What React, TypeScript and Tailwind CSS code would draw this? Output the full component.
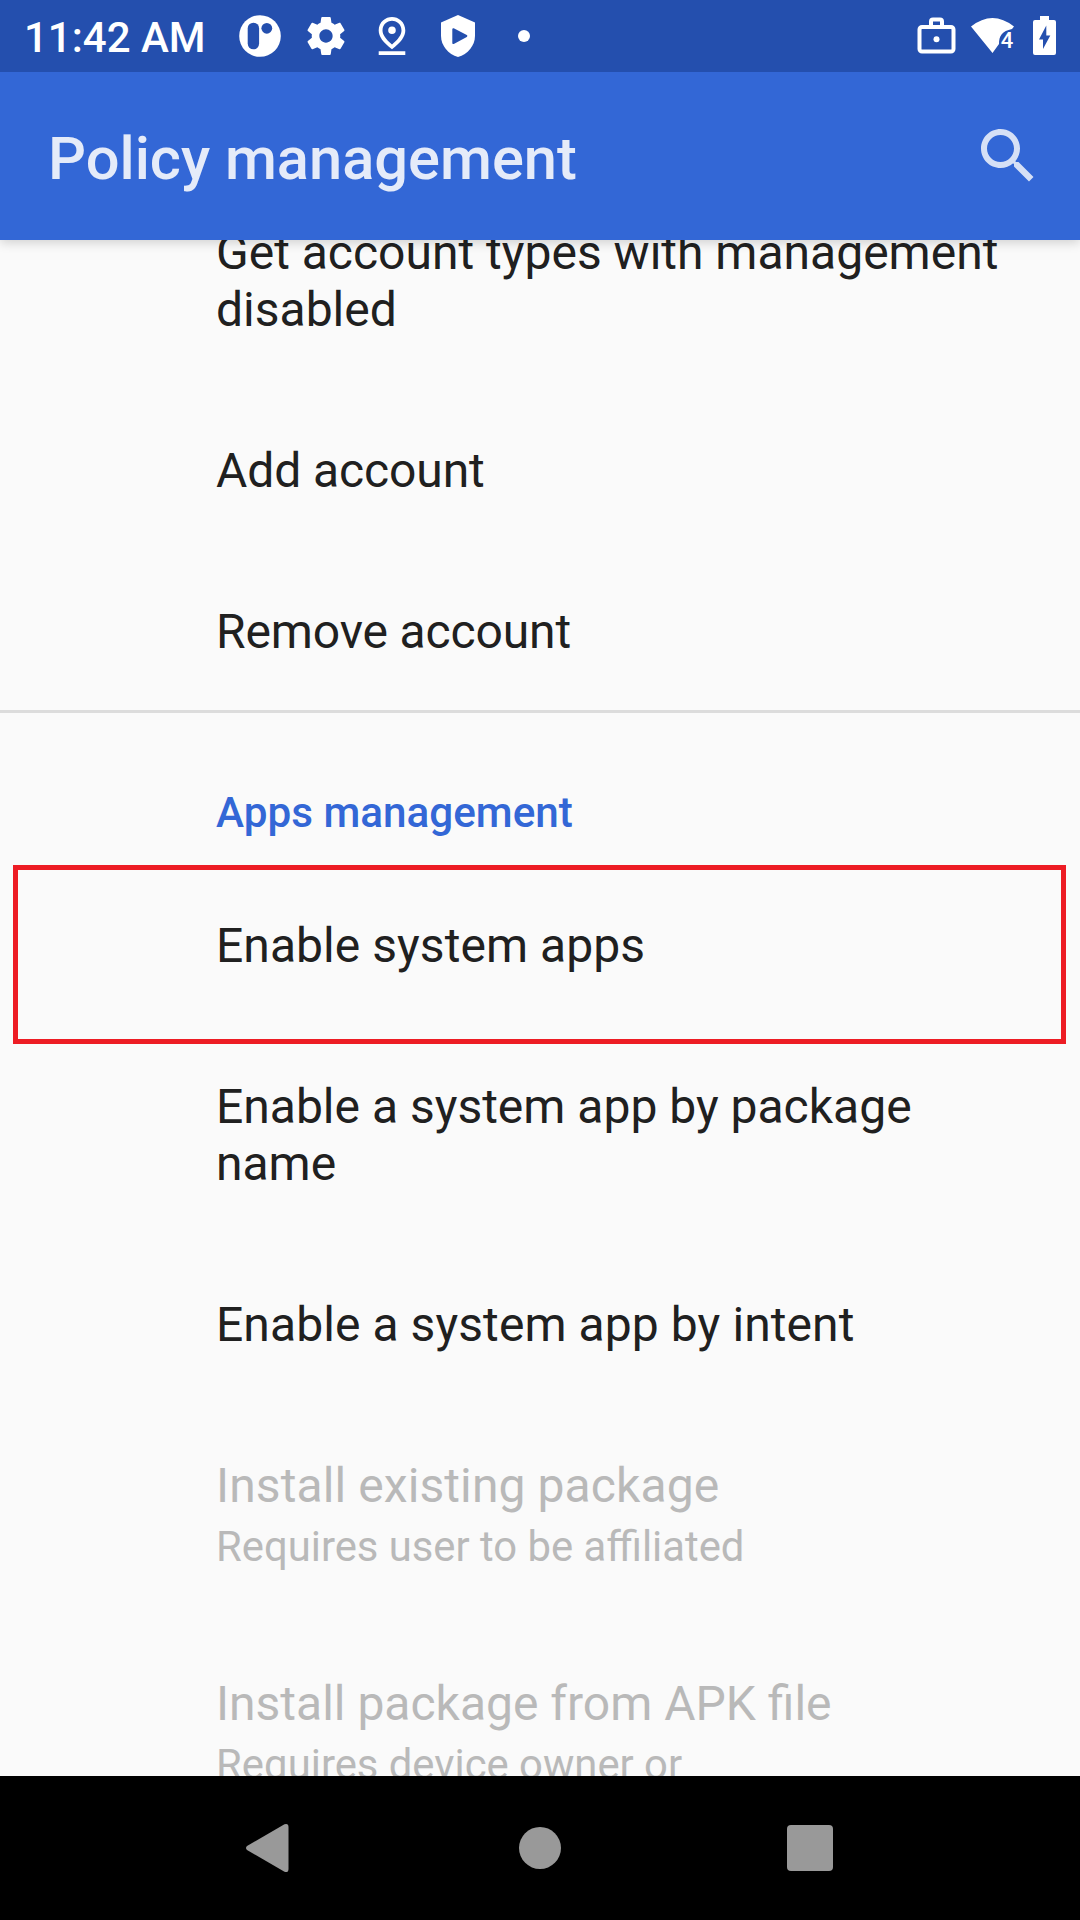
import React from "react";

interface ItemProps {
  children: React.ReactNode;
  sub?: string;
  tall?: boolean;
  disabled?: boolean;
  highlighted?: boolean;
  tracking?: string;
}

function Item({ children, sub, tall, disabled, highlighted, tracking = "" }: ItemProps) {
  return (
    <div className={`${tall ? "h-[218px]" : "h-[161px]"} relative pt-[54px] pl-[216px] shrink-0 whitespace-nowrap`}>
      <div className={`text-[48px] leading-[57px] ${tracking} ${disabled ? "text-[#b9b9b9]" : "text-[#202020]"}`}>{children}</div>
      {sub && <div className="text-[41.8px] leading-[49px] text-[#b9b9b9] mt-[8px]">{sub}</div>}
      {highlighted && <div className="absolute z-10 left-[13px] top-[2px] w-[1053px] h-[179px] border-[5px] border-[#ed1c24]" />}
    </div>
  );
}

function StatusIcons() {
  return (
    <svg width="300" height="72" viewBox="238 0 300 72" fill="white" className="shrink-0">
      <circle cx="260" cy="36" r="20.8" />
      <rect x="247.7" y="22.7" width="11.4" height="26.6" rx="5.7" fill="#244fae" />
      <circle cx="266.8" cy="28.3" r="5.4" fill="#244fae" />
      <g transform="translate(303.2 13.2) scale(1.9)">
        <path d="M19.43 12.98c.04-.32.07-.64.07-.98s-.03-.66-.07-.98l2.11-1.65c.19-.15.24-.42.12-.64l-2-3.46c-.12-.22-.39-.3-.61-.22l-2.49 1c-.52-.4-1.08-.73-1.69-.98l-.38-2.65C14.46 2.18 14.25 2 14 2h-4c-.25 0-.46.18-.49.42l-.38 2.65c-.61.25-1.17.59-1.69.98l-2.49-1c-.23-.09-.49 0-.61.22l-2 3.46c-.13.22-.07.49.12.64l2.11 1.65c-.04.32-.07.65-.07.98s.03.66.07.98l-2.11 1.65c-.19.15-.24.42-.12.64l2 3.46c.12.22.39.3.61.22l2.49-1c.52.4 1.08.73 1.69.98l.38 2.65c.03.24.24.42.49.42h4c.25 0 .46-.18.49-.42l.38-2.65c.61-.25 1.17-.59 1.69-.98l2.49 1c.23.09.49 0 .61-.22l2-3.46c.12-.22.07-.49-.12-.64l-2.11-1.65zM12 15.5c-1.93 0-3.5-1.57-3.5-3.5s1.57-3.5 3.5-3.5 3.5 1.57 3.5 3.5-1.57 3.5-3.5 3.5z" />
      </g>
      <g transform="translate(369.2 13.2) scale(1.9)">
        <path d="M12 4c1.93 0 5 1.4 5 5.15 0 2.16-1.72 4.67-5 7.32-3.28-2.65-5-5.17-5-7.32C7 5.4 10.07 4 12 4m0-2C8.73 2 5 4.46 5 9.15c0 3.12 2.33 6.41 7 9.85 4.67-3.44 7-6.73 7-9.85C19 4.46 15.27 2 12 2zM12 7a2 2 0 1 0 0 4 2 2 0 0 0 0-4zM5 20h14v2H5z" />
      </g>
      <path d="M458 15l17 7.6v13.4c0 9.5-7.2 18.3-17 21-9.8-2.7-17-11.5-17-21V22.6z" />
      <path d="M453.3 29.2l13 6.8-13 7z" fill="#244fae" stroke="#244fae" strokeWidth="2" strokeLinejoin="round" />
      <circle cx="524" cy="36" r="6" />
    </svg>
  );
}

function SystemIcons() {
  return (
    <svg width="150" height="72" viewBox="910 0 150 72" fill="white" className="shrink-0">
      <rect x="919.5" y="27" width="34" height="24.5" rx="2.5" fill="none" stroke="white" strokeWidth="4" />
      <path d="M931 26v-4.500q0-2 2-2h7q2 0 2 2V26" fill="none" stroke="white" strokeWidth="4" />
      <circle cx="936.5" cy="39.2" r="3" />
      <path d="M971 26.5Q992.5 9.5 1014 26.500L1012 29C1002 31 999 36 999 44L992.500 53z" />
      <text x="1000.800" y="48" fontSize="22" fontWeight="500" fontFamily="Roboto, sans-serif">4</text>
      <path d="M1040 16h9v4h5q2 0 2 2v31q0 2-2 2h-19q-2 0-2-2V22q0-2 2-2h5z" />
      <path d="M1046.3 25.5v10h4L1043 49V39.500h-4z" fill="#244fae" />
    </svg>
  );
}

export default function App() {
  return (
    <div className="w-[1080px] h-[1920px] flex flex-col overflow-hidden bg-[#fafafa] font-['Roboto',sans-serif]">
      <header className="shrink-0 relative z-10 shadow-[0_3px_10px_rgba(0,0,0,0.16)]">
        <div className="h-[72px] bg-[#244fae] flex items-center text-white pl-[24px] pr-[20px]">
          <div className="pt-[2px] text-[42px] font-medium w-[214px] shrink-0 whitespace-nowrap">11:42 AM</div>
          <StatusIcons />
          <div className="flex-1" />
          <SystemIcons />
        </div>
        <div className="h-[168px] bg-[#3367d6] flex items-center justify-between pl-[48px] pr-[36px]">
          <h1 className="pt-[7px] text-[59.6px] font-medium text-[#e5ebf9]">Policy management</h1>
          <svg width="72" height="72" viewBox="0 0 24 24" fill="#d6e0f6">
            <path d="M15.500 14h-.79l-.28-.27C15.410 12.590 16 11.110 16 9.500 16 5.910 13.090 3 9.500 3S3 5.910 3 9.500 5.910 16 9.500 16c1.610 0 3.090-.59 4.230-1.570l.27.28v.79l5 4.990L20.490 19l-4.990-5zm-6 0C7.010 14 5 11.990 5 9.500S7.010 5 9.500 5 14 7.010 14 9.500 11.990 14 9.500 14z" />
          </svg>
        </div>
      </header>
      <main className="flex-1 min-h-0 overflow-hidden flex flex-col">
        <div className="h-[148px] shrink-0 pl-[216px]">
          <div className="-mt-[16px] text-[48px] leading-[57px] text-[#202020] whitespace-nowrap">
            Get account types with management<br />disabled
          </div>
        </div>
        <Item tracking="tracking-[-0.1px]">Add account</Item>
        <Item tracking="tracking-[-0.13px]">Remove account</Item>
        <div className="h-[3px] shrink-0 bg-[#dcdcdc]" />
        <div className="h-[150px] shrink-0 pt-[75px] pl-[216px] text-[42.25px] leading-[49px] font-medium text-[#3367d6]">Apps management</div>
        <Item highlighted tracking="tracking-[0.05px]">Enable system apps</Item>
        <Item tall>Enable a system app by package<br />name</Item>
        <Item tracking="tracking-[0.08px]">Enable a system app by intent</Item>
        <Item tall disabled tracking="tracking-[0.1px]" sub="Requires user to be affiliated">Install existing package</Item>
        <Item tall disabled sub="Requires device owner or">Install package from APK file</Item>
      </main>
      <nav className="h-[144px] shrink-0 bg-black flex items-center pl-[246px]">
        <svg width="43" height="50" viewBox="0 0 43 50" fill="#999999">
          <path d="M1 23L38.500 1.200Q42.500 0 42.500 4V46Q42.500 50 38.500 48.800L1 27Q-1 25 1 23z" />
        </svg>
        <div className="ml-[230px] size-[42px] rounded-full bg-[#999999]" />
        <div className="ml-[226px] size-[46px] rounded-[4px] bg-[#999999]" />
      </nav>
    </div>
  );
}
